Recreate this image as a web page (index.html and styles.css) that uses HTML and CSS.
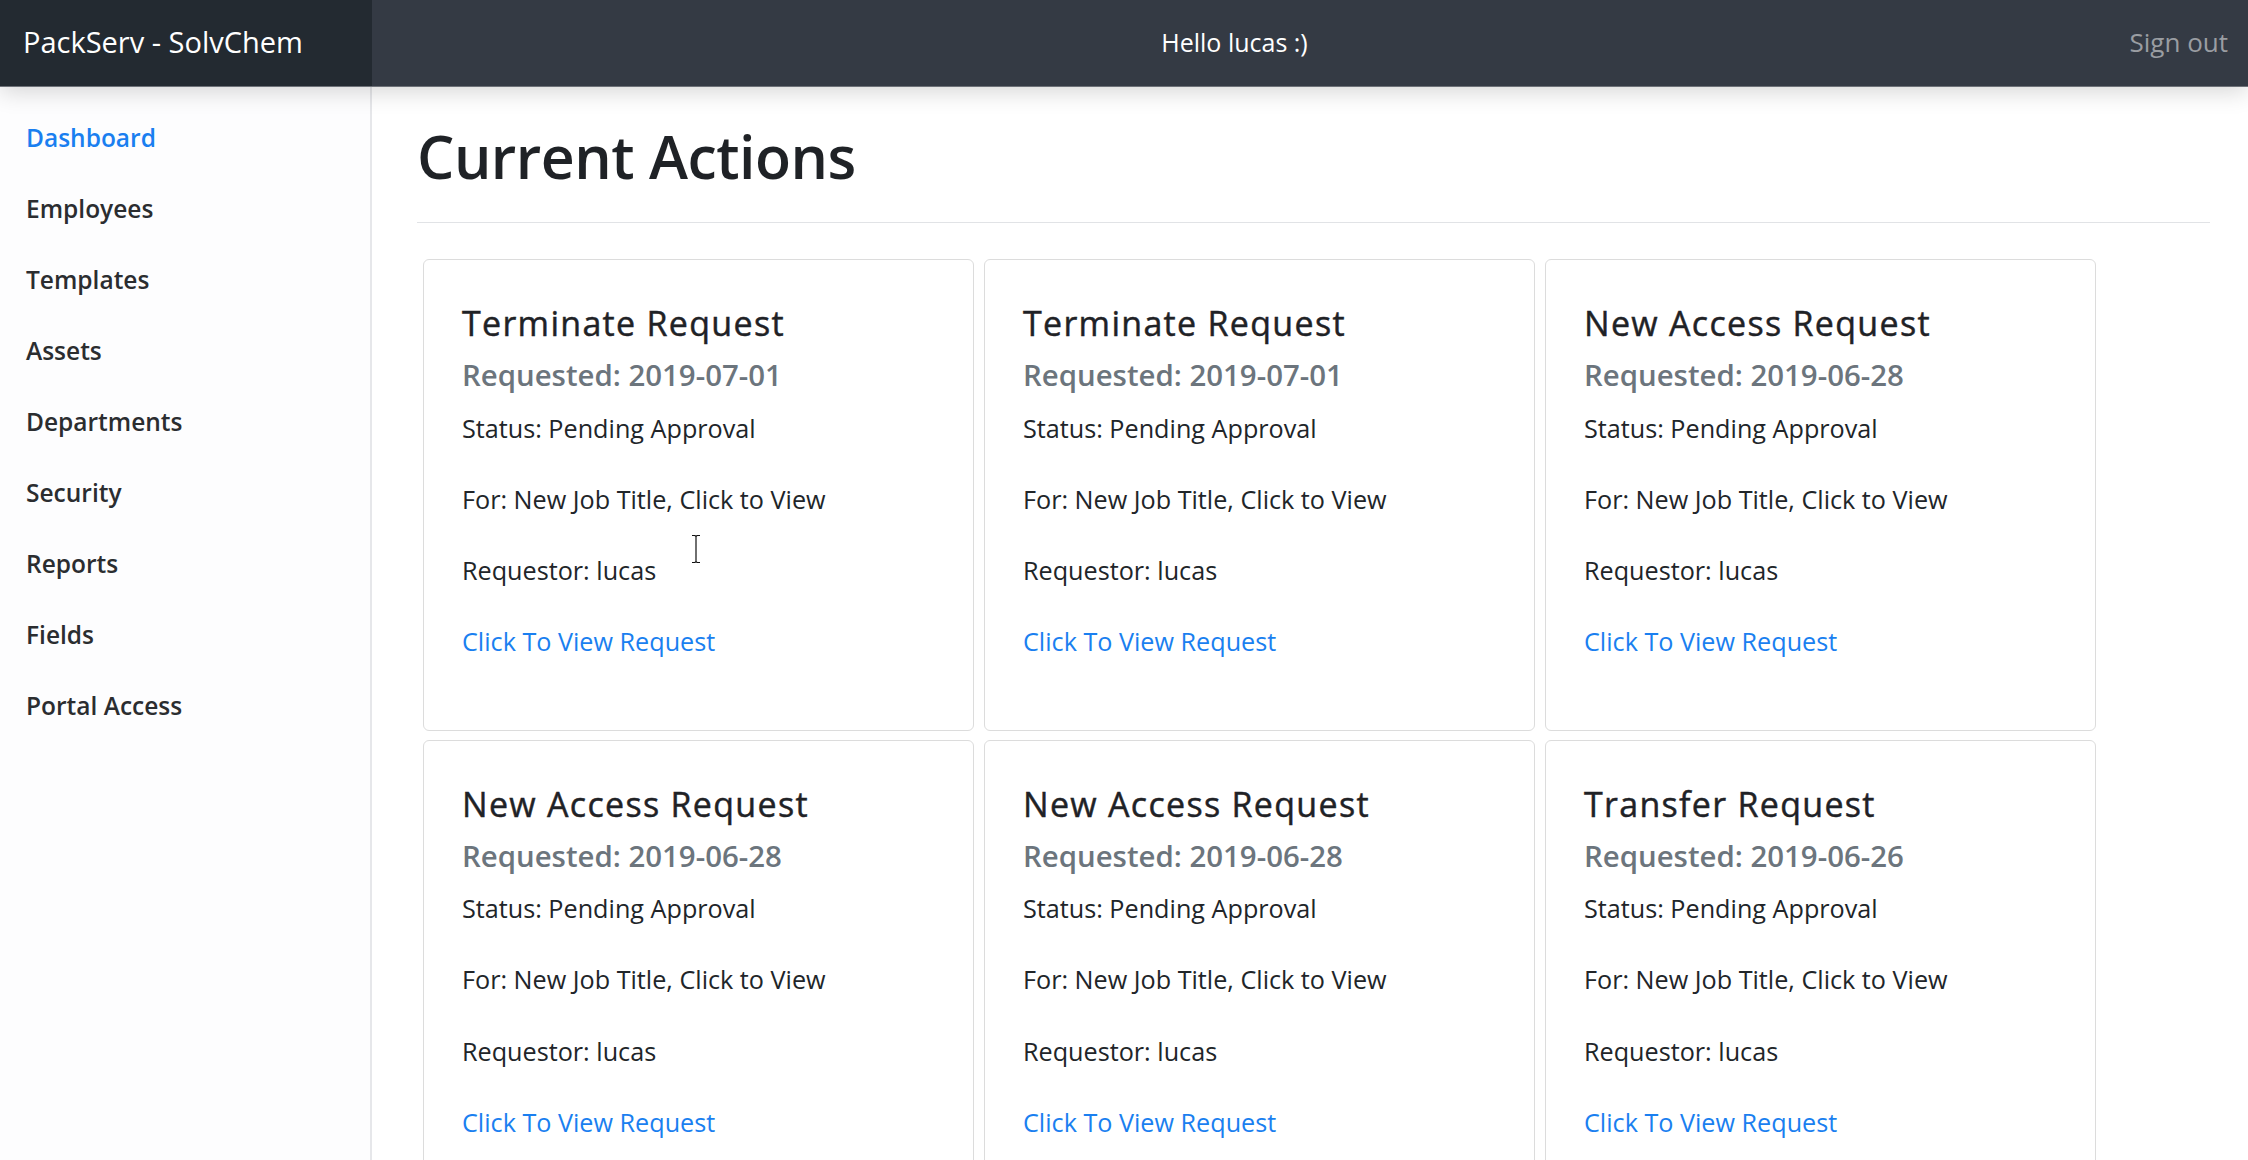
FILE: index.html
```html
<!DOCTYPE html>
<html lang="en">
<head>
<meta charset="utf-8">
<title>PackServ - SolvChem</title>
<link rel="stylesheet" href="styles.css">
</head>
<body>
<header class="navbar">
  <a class="brand" href="#">PackServ - SolvChem</a>
  <div class="greeting">Hello lucas :)</div>
  <a class="signout" href="#">Sign out</a>
</header>
<div class="layout">
  <nav class="sidebar">
    <ul class="nav">
      <li><a class="nav-link active" href="#">Dashboard</a></li>
      <li><a class="nav-link" href="#">Employees</a></li>
      <li><a class="nav-link" href="#">Templates</a></li>
      <li><a class="nav-link" href="#">Assets</a></li>
      <li><a class="nav-link" href="#">Departments</a></li>
      <li><a class="nav-link" href="#">Security</a></li>
      <li><a class="nav-link" href="#">Reports</a></li>
      <li><a class="nav-link" href="#">Fields</a></li>
      <li><a class="nav-link" href="#">Portal Access</a></li>
    </ul>
  </nav>
  <main class="main">
    <div class="page-header"><h1>Current Actions</h1></div>
    <div class="cards">
      <div class="card">
        <h5 class="card-title">Terminate Request</h5>
        <h6 class="card-subtitle">Requested: 2019-07-01</h6>
        <p>Status: Pending Approval</p>
        <p>For: New Job Title, Click to View</p>
        <p>Requestor: lucas</p>
        <p><a class="card-link" href="#">Click To View Request</a></p>
      </div>
      <div class="card">
        <h5 class="card-title">Terminate Request</h5>
        <h6 class="card-subtitle">Requested: 2019-07-01</h6>
        <p>Status: Pending Approval</p>
        <p>For: New Job Title, Click to View</p>
        <p>Requestor: lucas</p>
        <p><a class="card-link" href="#">Click To View Request</a></p>
      </div>
      <div class="card">
        <h5 class="card-title">New Access Request</h5>
        <h6 class="card-subtitle">Requested: 2019-06-28</h6>
        <p>Status: Pending Approval</p>
        <p>For: New Job Title, Click to View</p>
        <p>Requestor: lucas</p>
        <p><a class="card-link" href="#">Click To View Request</a></p>
      </div>
      <div class="card">
        <h5 class="card-title">New Access Request</h5>
        <h6 class="card-subtitle">Requested: 2019-06-28</h6>
        <p>Status: Pending Approval</p>
        <p>For: New Job Title, Click to View</p>
        <p>Requestor: lucas</p>
        <p><a class="card-link" href="#">Click To View Request</a></p>
      </div>
      <div class="card">
        <h5 class="card-title">New Access Request</h5>
        <h6 class="card-subtitle">Requested: 2019-06-28</h6>
        <p>Status: Pending Approval</p>
        <p>For: New Job Title, Click to View</p>
        <p>Requestor: lucas</p>
        <p><a class="card-link" href="#">Click To View Request</a></p>
      </div>
      <div class="card">
        <h5 class="card-title">Transfer Request</h5>
        <h6 class="card-subtitle">Requested: 2019-06-26</h6>
        <p>Status: Pending Approval</p>
        <p>For: New Job Title, Click to View</p>
        <p>Requestor: lucas</p>
        <p><a class="card-link" href="#">Click To View Request</a></p>
      </div>
    </div>
  </main>
</div>
<svg class="ibeam" width="12" height="30" viewBox="0 0 12 30" aria-hidden="true">
  <path d="M2 1.5h3l1 1 1-1h3M6 2.5v25M2 28.5h3l1-1 1 1h3" fill="none" stroke="#fff" stroke-width="3" stroke-linecap="square"/>
  <path d="M2 1.5h3l1 1 1-1h3M6 2.5v25M2 28.5h3l1-1 1 1h3" fill="none" stroke="#111" stroke-width="1.2"/>
</svg>
</body>
</html>
```

FILE: styles.css
```css
* { box-sizing: border-box; }

html, body {
  margin: 0;
  height: 100%;
}

body {
  font-family: "Open Sans", "Noto Sans", sans-serif;
  color: #212529;
  background: #fff;
  overflow: hidden;
}

a { text-decoration: none; }

.navbar {
  position: relative;
  z-index: 2;
  display: grid;
  grid-template-columns: 372px 1fr 151px;
  align-items: stretch;
  height: 86px;
  background: #343a44;
  box-shadow: 0 1px 0 #6d7178, 0 6px 22px rgba(0, 0, 0, 0.16);
}

.brand {
  display: flex;
  align-items: center;
  padding-left: 23px;
  padding-bottom: 4px;
  background: #232a31;
  color: #fff;
  font-size: 29px;
  font-weight: 400;
}

.greeting {
  display: flex;
  align-items: center;
  justify-content: center;
  color: #fff;
  font-size: 25px;
  padding-bottom: 3px;
}

.signout {
  display: flex;
  align-items: center;
  justify-content: flex-end;
  padding-right: 20px;
  padding-bottom: 3px;
  color: #9a9da2;
  font-size: 26px;
}

.layout {
  display: grid;
  grid-template-columns: 372px 1fr;
  height: calc(100% - 86px);
}

.sidebar {
  background: #fdfdfe;
  box-shadow: inset -2px 0 0 #e6e7ea;
}

.nav {
  list-style: none;
  margin: 0;
  padding: 16.5px 0 0;
}

.nav-link {
  display: block;
  padding: 17.5px 26px;
  line-height: 36px;
  font-size: 24.5px;
  font-weight: 600;
  color: #2b2d30;
}

.nav-link.active { color: #1a7ff0; }

.main {
  padding: 0 38px 0 45px;
  min-width: 0;
}

.page-header {
  padding: 35px 0 31px;
  border-bottom: 1px solid #e1e3e6;
}

.page-header h1 {
  margin: 0;
  font-size: 59px;
  line-height: 70px;
  font-weight: 600;
  letter-spacing: -0.5px;
  color: #1f2226;
}

.cards {
  display: flex;
  flex-wrap: wrap;
  gap: 9px 10px;
  margin: 36px 0 0 6px;
}

.card {
  width: 551px;
  padding: 44px 36px 35px 38px;
  border: 1px solid #dcdcdc;
  border-radius: 6px;
  background: #fff;
}

.card-title {
  margin: 0 0 16px;
  font-size: 34px;
  line-height: 38px;
  font-weight: 400;
  letter-spacing: 1.3px;
  -webkit-text-stroke: 0.45px #1f2226;
  color: #1f2226;
}

.card-subtitle {
  margin: 0 0 17.5px;
  font-size: 29.4px;
  line-height: 34px;
  font-weight: 600;
  color: #6c757d;
}

.card p {
  margin: 0 0 35.3px;
  font-size: 25.2px;
  line-height: 36px;
  color: #212529;
}

.card-link { color: #1a7ff0; }

.ibeam {
  position: absolute;
  left: 690px;
  top: 534px;
}
```
